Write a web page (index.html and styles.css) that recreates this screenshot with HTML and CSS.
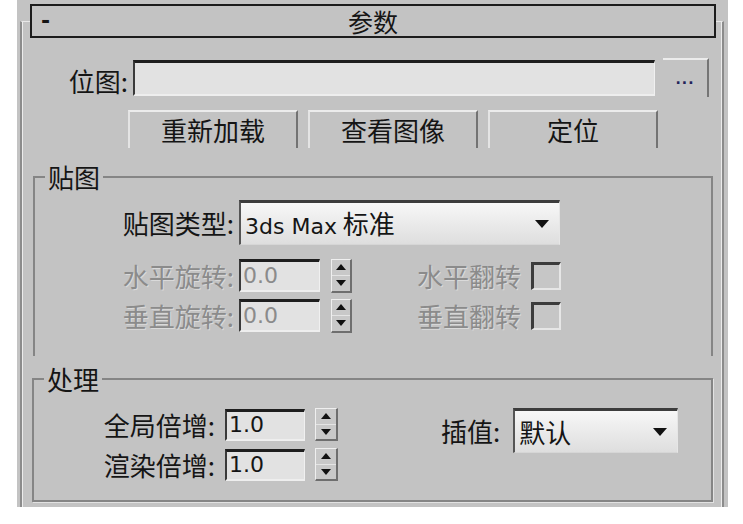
FILE: index.html
```html
<!DOCTYPE html>
<html>
<head>
<meta charset="utf-8">
<title>参数</title>
<link rel="stylesheet" href="styles.css">
</head>
<body>

<div class="panel">
    <div class="rollout-head">
        <span class="toggle">-</span>
        <span class="title">参数</span>
        <span></span>
    </div>

    <div class="rollout">
        <div class="bitmap-row">
            <span class="lbl-bitmap">位图:</span>
            <div class="field path"></div>
            <button type="button" class="dots">...</button>
        </div>

        <div class="btn-row">
            <button type="button" class="btn">重新加载</button>
            <button type="button" class="btn">查看图像</button>
            <button type="button" class="btn">定位</button>
        </div>

        <fieldset class="group map">
            <legend>贴图</legend>
            <div class="row type-row">
                <span class="lbl">贴图类型:</span>
                <div class="dropdown map-type">
                    <span><span class="lat">3ds Max</span> 标准</span>
                    <i class="arrow"></i>
                </div>
            </div>
            <div class="row rot-row">
                <span class="lbl off">水平旋转:</span>
                <div class="field num off">0.0</div>
                <div class="spin"><span class="up"></span><span class="down"></span></div>
                <span class="lbl2 off">水平翻转</span>
                <span class="check"></span>
            </div>
            <div class="row rot-row">
                <span class="lbl off">垂直旋转:</span>
                <div class="field num off">0.0</div>
                <div class="spin"><span class="up"></span><span class="down"></span></div>
                <span class="lbl2 off">垂直翻转</span>
                <span class="check"></span>
            </div>
        </fieldset>

        <fieldset class="group proc">
            <legend>处理</legend>
            <div class="proc-body">
                <div class="proc-left">
                    <div class="row">
                        <span class="lbl">全局倍增:</span>
                        <div class="field num">1.0</div>
                        <div class="spin"><span class="up"></span><span class="down"></span></div>
                    </div>
                    <div class="row">
                        <span class="lbl">渲染倍增:</span>
                        <div class="field num">1.0</div>
                        <div class="spin"><span class="up"></span><span class="down"></span></div>
                    </div>
                </div>
                <div class="row interp">
                    <span class="lbl3">插值:</span>
                    <div class="dropdown interp-type">
                        <span>默认</span>
                        <i class="arrow"></i>
                    </div>
                </div>
            </div>
        </fieldset>
    </div>
</div>

</body>
</html>
```

FILE: styles.css
```css
body { margin: 0; background: #fff; font-family: "Noto Sans CJK SC", "Noto Sans", sans-serif; font-size: 26px; color: #151515; }
.lat, .num, .toggle { font-family: "DejaVu Sans", "Noto Sans CJK SC", sans-serif; font-size: 22px; }

.panel { margin-left: 17px; width: 711px; height: 507px; box-sizing: border-box; padding-top: 4px; background: #c3c3c3; display: flex; flex-direction: column; overflow: hidden; }

.rollout-head { position: relative; z-index: 1; margin: 0 12px 0 13px; height: 34px; box-sizing: border-box; border: 2px solid #1c1c1c; background: #c3c3c3; display: grid; grid-template-columns: 1fr auto 1fr; align-items: center; line-height: 1; }
.title { font-size: 25px; }
.toggle { padding-left: 9px; font-size: 22px; font-weight: bold; }

.rollout { flex: 1; margin: -17px 4px 0 3px; padding-top: 36px; border: 2px solid #8c8c8c; border-top: 1px solid #e8e8e8; border-bottom: none; box-shadow: inset 1px 0 0 #ececec, inset -1px 0 0 #ececec; }

.bitmap-row { display: flex; align-items: center; height: 39px; }
.lbl-bitmap { width: 106px; text-align: right; margin-right: 5px; line-height: 1; padding-top: 6px; }
.field { box-sizing: border-box; background: #e2e2e2; border-top: 3px solid #1e1e1e; border-left: 2px solid #3a3a3a; border-right: 1px solid #f0f0f0; border-bottom: 2px solid #eeeeee; }
.path { width: 522px; height: 36px; }
.dots { width: 46px; height: 39px; margin-left: 8px; padding: 0; background: #c3c3c3; border: 0; border-top: 2px solid #ececec; border-right: 2px solid #757575; color: #23235a; font-family: "DejaVu Sans", sans-serif; font-size: 14px; font-weight: bold; letter-spacing: 1px; }

.btn-row { display: grid; grid-template-columns: repeat(3, 170px); gap: 10px; margin: 13px 0 0 106px; }
.btn { height: 38px; padding: 0; background: #c3c3c3; border: 0; border-top: 2px solid #ececec; border-left: 2px solid #e4e4e4; border-right: 2px solid #737373; font: inherit; color: #151515; line-height: 1; }

.group { margin: 0 9px 0 11px; padding: 0; border: 2px solid #858585; box-shadow: 1px 1px 0 #e2e2e2; min-width: 0; }
.group legend { margin-left: 10px; padding: 0 3px; line-height: 26px; }
.map { margin-top: 16px; padding: 10px 0 24px; border-bottom: none; box-shadow: none; }
.proc { margin: 10px 9px 0 10px; padding: 16px 0 19px; }

.row { display: flex; align-items: center; line-height: 1; }
.off { color: #8b8b8b; text-shadow: 1px 1px 0 #dadada; }
.field.off { text-shadow: none; }

.map .lbl { width: 199px; text-align: right; margin-right: 5px; }
.type-row { margin-bottom: 14px; }
.rot-row { height: 33px; }
.rot-row + .rot-row { margin-top: 7px; }
.map .num { width: 81px; height: 33px; margin-right: 11px; }
.num { display: flex; align-items: center; padding-left: 2px; }
.lbl2 { width: 169px; text-align: right; margin-right: 10px; }

.dropdown { display: flex; align-items: center; justify-content: space-between; box-sizing: border-box; padding: 0 10px 0 4px; background: linear-gradient(#f7f7f7, #dedede); border-top: 3px solid #3c3c3c; border-left: 2px solid #555; border-right: 1px solid #e6e6e6; border-bottom: 1px solid #d6d6d6; }
.map-type { width: 321px; height: 45px; }
.arrow { width: 0; height: 0; border-left: 7px solid transparent; border-right: 7px solid transparent; border-top: 8px solid #111; }

.spin { display: flex; flex-direction: column; width: 21px; height: 34px; box-sizing: border-box; background: #c8c8c8; border-top: 1px solid #efefef; border-left: 1px solid #efefef; border-right: 2px solid #6e6e6e; border-bottom: 2px solid #6e6e6e; }
.spin span { flex: 1; display: flex; align-items: center; justify-content: center; }
.spin .down { border-top: 1px solid #e4e4e4; }
.spin .up::before { content: ""; border-left: 5px solid transparent; border-right: 5px solid transparent; border-bottom: 6px solid #111; }
.spin .down::before { content: ""; border-left: 5px solid transparent; border-right: 5px solid transparent; border-top: 6px solid #111; }

.check { width: 30px; height: 28px; box-sizing: border-box; background: #c6c6c6; border-top: 3px solid #3c3c3c; border-left: 3px solid #3c3c3c; border-right: 2px solid #e6e6e6; border-bottom: 2px solid #e6e6e6; }

.proc-body { display: flex; align-items: flex-start; }
.proc-left .row { height: 33px; }
.proc-left .row + .row { margin-top: 7px; }
.proc .lbl { width: 181px; text-align: right; margin-right: 10px; }
.proc .num { width: 80px; height: 32px; margin-right: 10px; }
.proc .spin { width: 23px; height: 33px; }
.interp { margin-left: 103px; }
.lbl3 { margin-right: 13px; }
.interp-type { width: 165px; height: 45px; }
```
